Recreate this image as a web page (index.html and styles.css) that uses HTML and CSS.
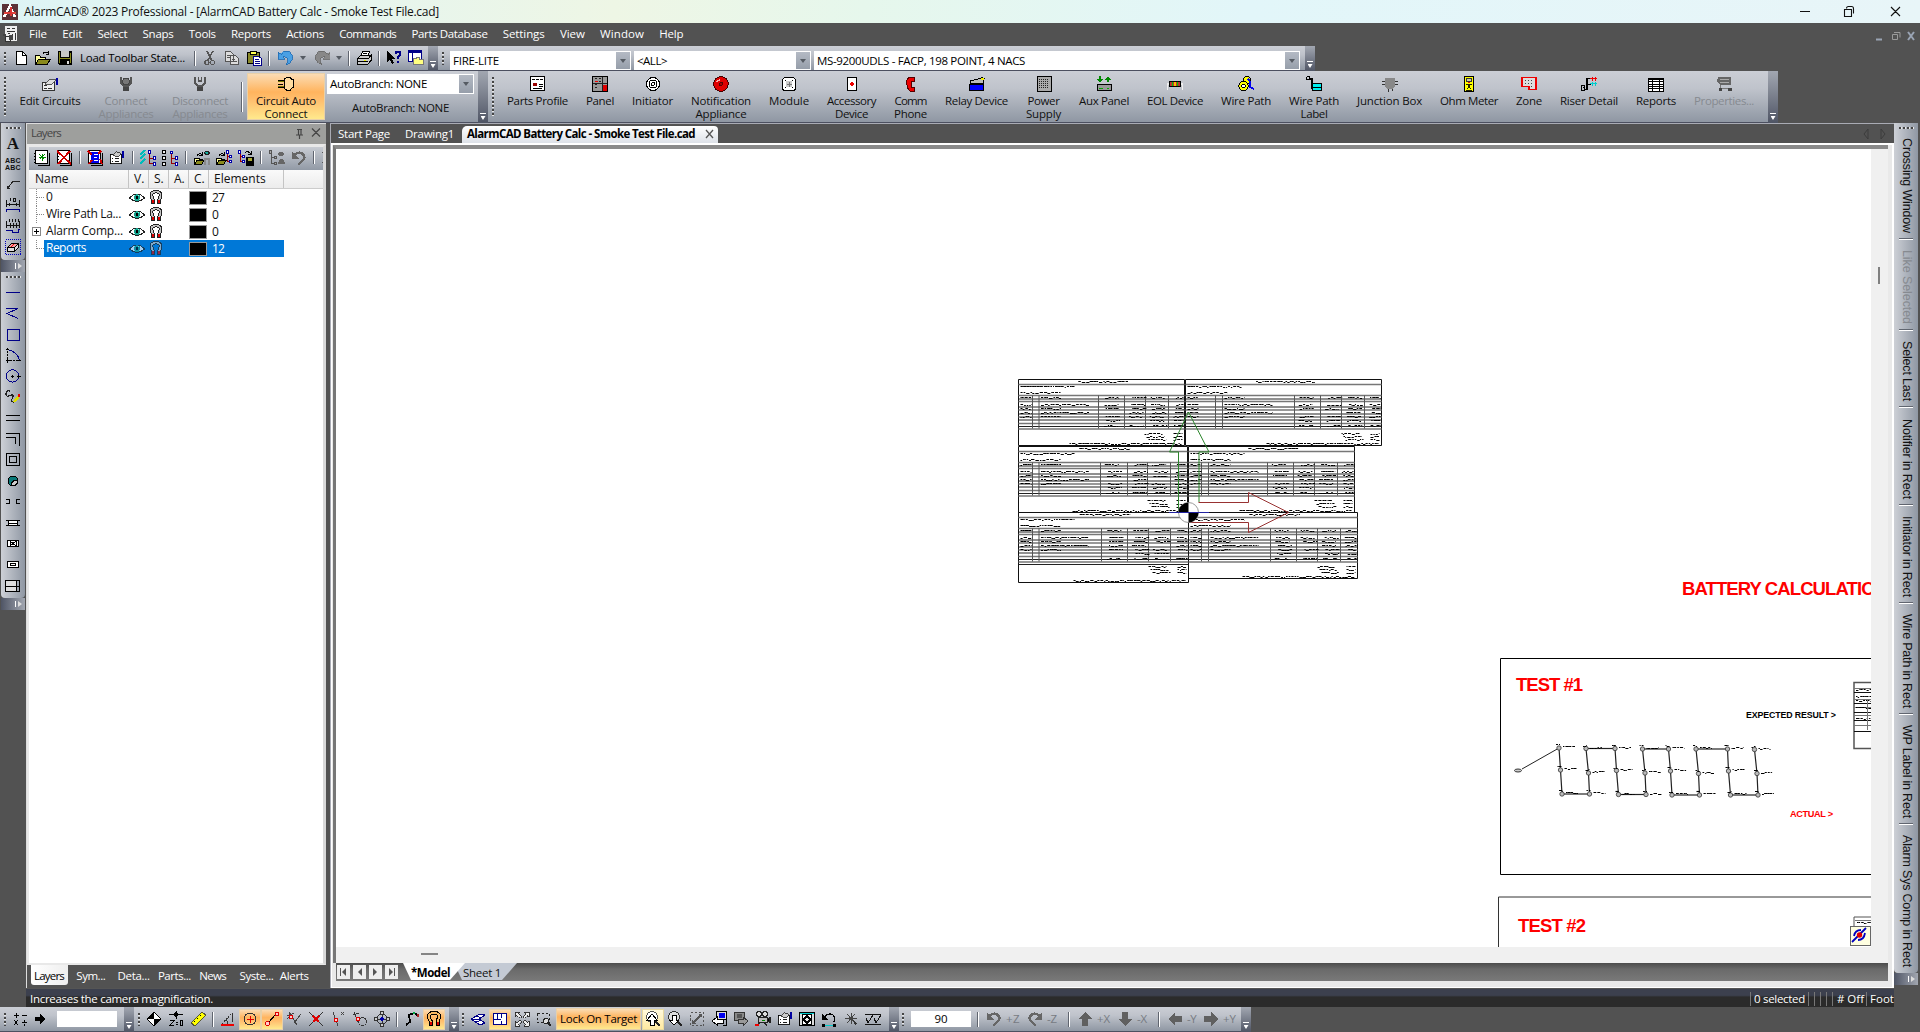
FILE: index.html
```html
<!DOCTYPE html>
<html lang="en">
<head>
<meta charset="utf-8">
<title>AlarmCAD® 2023 Professional</title>
<link rel="stylesheet" href="styles.css">
</head>
<body>
<svg class="defs" aria-hidden="true">
  <symbol id="app" viewBox="0 0 16 16"><rect width="16" height="16" rx="1" fill="#5b3238"/><path d="M2 13L8 2l5 11" stroke="#fff" stroke-width="2.4" fill="none"/><path d="M2 9h12" stroke="#e0403c" stroke-width="2.4"/><path d="M9 3v9" stroke="#d33" stroke-width="2"/></symbol>
  <symbol id="doc" viewBox="0 0 16 16"><path fill="#eee" d="M2 0h12v15H2z"/><path stroke="#333" fill="none" d="M2 10h5v5H2zM4 2h3M9 2h3M4 5h8M9 8v5M12 7v7M5 7h2"/><path d="M0 8h3v2H0zM6 9h4v5H6z" fill="#444"/></symbol>
  <symbol id="new" viewBox="0 0 16 16"><path d="M3.5 1.5h6l4 4v9h-10z" fill="#fff" stroke="#000"/><path d="M9.500 1.500v4h4" fill="none" stroke="#000"/></symbol>
  <symbol id="open" viewBox="0 0 16 16"><path d="M.5 14.500v-9h4l1 1.500h5v3" fill="#ffff9c" stroke="#000"/><path d="M.5 14.500l3-5h12l-3.500 5z" fill="#8a8a1c" stroke="#000"/><path d="M8 3.500q3-3 5.500 0M13.500 1v3h-3" fill="none" stroke="#000"/></symbol>
  <symbol id="save" viewBox="0 0 16 16"><path d="M1 1h14v14H2l-1-1z" fill="#000"/><path d="M4 1h8v6H4z" fill="#c8c8c8"/><path d="M2 2h1v11H2zM13 3h1v10h-1zM3 8h10v1H3z" fill="#8a8a1c"/><path d="M10 11h2v3h-2z" fill="#ddd"/></symbol>
  <symbol id="cut" viewBox="0 0 16 16"><path d="M5 1l4.500 9M11 1L6 10" stroke="#555" stroke-width="1.500"/><circle cx="5" cy="12.500" r="2" fill="none" stroke="#555" stroke-width="1.300"/><circle cx="10.500" cy="12.500" r="2" fill="none" stroke="#555" stroke-width="1.300"/></symbol>
  <symbol id="copy" viewBox="0 0 16 16"><path d="M1.500 1.500h5l3 3v7h-8zM6.500 5.500h5l3 3v6h-8z" fill="#ddd" stroke="#555"/><path d="M3 5.500h3M3 7.500h3M8 9.500h3M8 11.500h5" stroke="#555"/></symbol>
  <symbol id="paste" viewBox="0 0 16 16"><path d="M1.500 2.500h12v11h-12z" fill="#8a8a2a" stroke="#000"/><path d="M4.500 1h6v3h-6z" fill="#ffff50" stroke="#000"/><path d="M7.500 6.500h5l3 2v7h-8z" fill="#fff" stroke="#008"/><path d="M9 9.500h4M9 11.500h5M9 13.500h5" stroke="#008"/></symbol>
  <symbol id="undo" viewBox="0 0 16 16"><path d="M0 9V2l2.500 2Q7-1 12 2q4 4 2 8-2 4-6 5 3-4 1-7-2-2-4-1l2 2z" fill="#4aa0e4" stroke="#1c68b0" stroke-width=".8"/></symbol>
  <symbol id="redo" viewBox="0 0 16 16"><path d="M16 9V2l-2.500 2Q9-1 4 2q-4 4-2 8 2 4 6 5-3-4-1-7 2-2 4-1l-2 2z" fill="#888" stroke="#666" stroke-width=".8"/></symbol>
  <symbol id="print" viewBox="0 0 16 16"><path d="M5 5.500L6.500 1.500h7L12 5.500" fill="#fff" stroke="#000"/><path d="M1.500 8.500l3-3h10l-2 3zM1.500 8.500h11l2.500-3v5l-3 3.500h-10.500z" fill="#ccc" stroke="#000"/><path d="M7 3.500h4M2 11.500h10" stroke="#000"/><path d="M8 10h2" stroke="#ee0"/></symbol>
  <symbol id="help" viewBox="0 0 16 16"><path d="M1 1v11l3-2.500 2 4.500 2-1-2-4h4z" fill="#000"/><path d="M9.500 4q0-2.500 2.500-2.500T14.500 4q0 1.500-2.500 2.500v2.500M12 10.500v2" stroke="#008" stroke-width="2" fill="none"/></symbol>
  <symbol id="win" viewBox="0 0 16 16"><path d="M.5.5h13v11H.5z" fill="#fff" stroke="#008"/><path d="M0 0h14v3H0z" fill="#008"/><path d="M4 3v8" stroke="#008"/><path d="M5.500 14.500V8h3l1-1h2v2h4v5.500z" fill="#ffff80" stroke="#777"/></symbol>
  <symbol id="props" viewBox="0 0 18 16"><path d="M1.500 3.500h12v11h-12z" fill="#fff" stroke="#000"/><path d="M3 8.500h2M6.500 8.500h5M3 11.500h2M6.500 11.500h5" stroke="#000"/><path d="M4 5l4-4 6 2-4 4z" fill="#ccc" stroke="#333"/><path d="M14 0h3v8h-2z" fill="#0000a0"/></symbol>
  <symbol id="edit" viewBox="0 0 18 16"><path d="M1.500 6.500h12v8h-12z" fill="#eee" stroke="#333"/><path d="M3 9.500h3M3 12.500h3M7 12.500h4" stroke="#333"/><path d="M4 8l5-5 6 1-5 5z" fill="#ddd" stroke="#555"/><path d="M14.500 2h2.500v7h-2z" fill="#0000a0"/></symbol>
  <symbol id="con" viewBox="0 0 16 16"><path d="M3 1v6l3 3h4l3-3V1" fill="none" stroke="#555" stroke-width="2"/><circle cx="8" cy="5.500" r="3.300" fill="#777" stroke="#444"/><path d="M5 11h6v4H5z" fill="#444"/></symbol>
  <symbol id="dis" viewBox="0 0 16 16"><path d="M3 1v6l3 3h4l3-3V1M6.500 1v4h3V1" fill="none" stroke="#555" stroke-width="1.500"/><path d="M5 11h6v4H5z" fill="#444"/></symbol>
  <symbol id="plug" viewBox="0 0 16 16"><path d="M0 4h6v2H0zM0 10h6v2H0z" fill="#770"/><path d="M0 4.500h6M0 8h5M0 11.500h6" stroke="#000"/><path d="M6.500 2.500L9 1.500h3v13H9l-2.500-2z" fill="#ffdca0" stroke="#000"/><path d="M12 2.500l3 1v8l-3 2" fill="#ffdca0" stroke="#000"/></symbol>
  <symbol id="parts" viewBox="0 0 16 16"><path d="M.5.5h14v14H.5z" fill="#fff" stroke="#000"/><path d="M2 3.500h3M6 3.500h3M10 3.500h3M9 8.500h4M9 10.500h4M3 12.500h9" stroke="#000"/><circle cx="5" cy="8.500" r="2" fill="#900"/></symbol>
  <symbol id="panel" viewBox="0 0 16 16"><path d="M.5.5h15v15H.5z" fill="#999" stroke="#000"/><path d="M3 2.500h2M3 5.500h2M3 8.500h2M3 11.500h2M7 2.500h2M7 5.500h2M10.500 1v14M1 7.500h14" stroke="#222"/><path d="M11 9h4v6h-4z" fill="#d00"/><path d="M3 5h3v1H3z" fill="#e00"/></symbol>
  <symbol id="init" viewBox="0 0 16 16"><circle cx="8" cy="8" r="6.500" fill="#fff" stroke="#000"/><circle cx="8" cy="8" r="4" fill="none" stroke="#000"/><circle cx="8" cy="8" r="1.500" fill="none" stroke="#000"/></symbol>
  <symbol id="bell" viewBox="0 0 16 16"><circle cx="8" cy="8" r="7.300" fill="#e00000" stroke="#400"/><circle cx="8" cy="8" r="1.500" fill="#a00" stroke="#500"/><path d="M4 6q1-2 3-2" stroke="#faa" fill="none" stroke-width="1.500"/></symbol>
  <symbol id="mod" viewBox="0 0 16 16"><rect x="1.500" y="1.500" width="13" height="13" rx="3" fill="#fff" stroke="#000"/><circle cx="8" cy="8" r="3.500" fill="#ccc"/><path d="M8 5.500v5M5.500 8h5" stroke="#777"/><path d="M4 4h1v1H4zM11 4h1v1h-1zM11 11h1v1h-1zM4 11h1v1H4z"/></symbol>
  <symbol id="acc" viewBox="0 0 16 16"><path d="M3.500 1.500h9v13h-9z" fill="#fff" stroke="#000"/><path d="M8 6v4M6 8h4" stroke="#e00" stroke-width="1.300"/></symbol>
  <symbol id="phone" viewBox="0 0 16 16"><path d="M6 1h5v4H8.500q-1 3 0 6H11v4H7Q3 12 4 4z" fill="#e00" stroke="#500"/></symbol>
  <symbol id="relay" viewBox="0 0 16 16"><path d="M.5 8.500h14v6H.5z" fill="#00f" stroke="#000"/><path d="M1 7.500V5l10-2.500 2-1 2 1-1 5z" fill="#bbb" stroke="#000"/><path d="M12 2h3v2h-3z" fill="#ee0"/></symbol>
  <symbol id="power" viewBox="0 0 16 16"><path d="M1 .5h14v15H1z" fill="#aaa" stroke="#000"/><path d="M3 3.500h10M3 5.500h10M3 7.500h10M3 9.500h10M3 11.500h10" stroke="#222" stroke-dasharray="1 1"/></symbol>
  <symbol id="aux" viewBox="0 0 16 16"><path d="M1 8.500h14v6H1z" fill="#999" stroke="#000"/><path d="M3 12.500h4M11 12.500h2" stroke="#0a0"/><path d="M4 0v5M12 6V1" stroke="#080" stroke-width="2"/><path d="M1 3h6L4 6.500zM9 3.500h6L12 0z" fill="#080"/></symbol>
  <symbol id="eol" viewBox="0 0 16 16"><path d="M0 14V8h16v6" stroke="#eee" fill="none" stroke-width="1.500"/><rect x="2.500" y="5.500" width="11" height="5" rx="1" fill="#b33" stroke="#000"/><path d="M5.500 6v4M10.500 6v4" stroke="#0c0"/><path d="M8 6v4" stroke="#fb0" stroke-width="2"/></symbol>
  <symbol id="wire" viewBox="0 0 16 16"><circle cx="9" cy="4" r="3.500" fill="#ff0" stroke="#000"/><path d="M10 3q3 3 2 8l4 2" stroke="#00e" stroke-width="2" fill="none"/><circle cx="5.500" cy="10" r="4.700" fill="#ff0" stroke="#000"/><circle cx="5.500" cy="10" r="1.800" fill="#fff" stroke="#000"/></symbol>
  <symbol id="wlab" viewBox="0 0 16 16"><circle cx="2" cy="2" r="1.500" fill="none" stroke="#000"/><path d="M3 3h3v9h1" stroke="#000" fill="none" stroke-width="1.200"/><path d="M6.500 7.500h9v7h-9z" fill="#0ee" stroke="#000"/><path d="M7 11h8" stroke="#000"/></symbol>
  <symbol id="jbox" viewBox="0 0 16 16"><path d="M0 5.500h16M0 8.500h16M6.500 12v4M10 12v3" stroke="#333"/><path d="M3 2h10v9l-3 2H6l-3-2z" fill="#888"/></symbol>
  <symbol id="ohm" viewBox="0 0 16 16"><path d="M3.500.5h9v15h-9z" fill="#ff0" stroke="#000"/><path d="M5.500 2.500h5v3h-5z" fill="#cca" stroke="#333"/><path d="M6 13l4-5M10 13L6 8M5 8h6M5 14h6" stroke="#220"/><path d="M7 6h2v1H7z" fill="#e00"/></symbol>
  <symbol id="zone" viewBox="0 0 16 16"><path d="M1 1.500h14v12H8v-3H1z" fill="#ddd" stroke="#e00" stroke-width="1.300"/><path d="M4 4.500h9M4 7.500h9M10 10.500h3" stroke="#444" stroke-dasharray="1 2"/></symbol>
  <symbol id="riser" viewBox="0 0 16 16"><path d="M.5 9.500h3v5h-3zM3 13.500h3V2.500h4M3 12V11M7 8.500h3" fill="none" stroke="#000" stroke-width="1.300"/><path d="M9 2.500h7M11 .5v4M14 .5v4" stroke="#e00"/><path d="M9 7.500h7M11 5.500v4M14 5.500v4" stroke="#0cc"/></symbol>
  <symbol id="rep" viewBox="0 0 16 16"><path d="M.5 2h15v13H.5z" fill="#fff" stroke="#000"/><path d="M0 1.500h16v2H0z"/><path d="M1 5.500h14M1 8.500h14M1 10.500h14M1 12.500h14M4.500 3v12M11.500 3v12" stroke="#000"/></symbol>
  <symbol id="prp2" viewBox="0 0 16 16"><path d="M2 1h13v8H4L1 5z" fill="#666"/><path d="M4 3.500h9M4 6h9" stroke="#aaa"/><path d="M4 9v3h9" stroke="#777" fill="none"/><path d="M3 12h3v3H3zM12 12h4v3h-4z" fill="#444"/></symbol>
  <symbol id="eye" viewBox="0 0 16 12"><path d="M.5 6Q8-2 15.500 6 8 13 .5 6z" fill="#fff" stroke="#222"/><circle cx="8" cy="5.800" r="3.500" fill="#14a08c"/><circle cx="8" cy="5.800" r="1.500"/><path d="M5 3l1 1M11 8l-1-1M10 3l-1 1M5 8l1-1" stroke="#9fe"/></symbol>
  <symbol id="mag" viewBox="0 0 14 16"><path d="M3.500 15v-5Q.5 4 4 2.500 7 .5 10 2.500q3.500 1.500.500 7.500v5" fill="none" stroke="#222" stroke-width="4"/><path d="M3.500 14v-4Q.5 4 4 2.500 7 .5 10 2.500q3.500 1.500.5 7.500v4" fill="none" stroke="#c4c4c4" stroke-width="2"/><path d="M2.500 10.500h2v3.500h-2zM9.500 10.500h2v3.500h-2z" fill="#d00"/></symbol>
  <symbol id="ladd" viewBox="0 0 16 16"><path d="M1.500.5h12v13h-12z" fill="#fff" stroke="#000"/><path d="M15 3v12.500H4" stroke="#000" fill="none"/><path d="M0 3h2M0 6h2M0 9h2M0 12h2" stroke="#000"/><path d="M8 3.500v7M4.500 7h7M5.500 4.500l5 5M10.500 4.500l-5 5" stroke="#080"/></symbol>
  <symbol id="ldel" viewBox="0 0 16 16"><path d="M1.500.5h12v13h-12z" fill="#fff" stroke="#000"/><path d="M15 3v12.500H4M1 3h2M1 6h2M1 9h2" stroke="#000" fill="none"/><path d="M1 1l14 13M14 1L2 14" stroke="#c00" stroke-width="1.800"/></symbol>
  <symbol id="lsel" viewBox="0 0 16 16"><path d="M1.500.5h12v13h-12z" fill="#fff" stroke="#000"/><path d="M4 2h8v11H4z" fill="#00e"/><path d="M15 3v12.500H4" stroke="#000" fill="none"/><path d="M7 4.500h4M7 7.500h3M7 10.500h4" stroke="#fff"/><path d="M1 1l4 4M13 9l2 5M14 1l-3 3M2 14l3-4" stroke="#c00" stroke-width="1.800"/></symbol>
  <symbol id="tree1" viewBox="0 0 16 16"><path d="M5 0L0 5M5 4L0 9M5 9l-5 5" stroke="#0bb" stroke-width="2"/><path d="M9.500 3v10h3M9.500 8.500h3" stroke="#900" fill="none"/><path d="M8.500.5h2v3h-2zM13 6.500h2v3h-2zM13 12h2v3h-2z" fill="#fff" stroke="#00a"/></symbol>
  <symbol id="tree2" viewBox="0 0 16 16"><path d="M.5.5h3v3h-3zM.5 6.500h3v3h-3zM.5 12h3v3h-3z" fill="#eee" stroke="#000"/><path d="M9.500 3v10h3M9.500 8.500h3" stroke="#900" fill="none"/><path d="M8.500 1.500h2v2h-2zM13 6.500h2v3h-2zM13 12h2v3h-2z" fill="#fff" stroke="#00a"/></symbol>
  <symbol id="topen" viewBox="0 0 16 16"><path d="M.5 14.500V8h4l1 1h3v2" fill="#ffff9c" stroke="#000"/><path d="M.5 14.500l2.500-4h7l-2.500 4z" fill="#8a8a1c" stroke="#000"/><path d="M3 6q2-4 5-1M8 2v3H5" fill="none" stroke="#000"/><path d="M10 3q2.500-3 6 0-3 3-6 0z" fill="#1a9" stroke="#222"/><path d="M11 15V9h4v6" stroke="#888" fill="none" stroke-width="2"/></symbol>
  <symbol id="topen2" viewBox="0 0 16 16"><path d="M.5 14.500V8h4l1 1h3v2" fill="#ffff9c" stroke="#000"/><path d="M.5 14.500l2.500-4h7l-2.500 4z" fill="#8a8a1c" stroke="#000"/><path d="M3 6q2-4 5-1M8 2v3H5" fill="none" stroke="#000"/><path d="M11.500 2v9h3M11.500 6.500h3" stroke="#900" fill="none"/><path d="M10.500.5h2v3h-2zM13.500 5.500h2v2h-2zM13.500 10h2v2h-2z" fill="#fff" stroke="#00a"/></symbol>
  <symbol id="tsave" viewBox="0 0 16 16"><path d="M2 2v9h3M2 6.500h3" stroke="#900" fill="none"/><path d="M.5.5h2v3h-2zM4.500 5.500h2v2h-2zM4.500 10h2v2h-2z" fill="#fff" stroke="#00a"/><path d="M8 7h8v9H8z"/><path d="M10 8h4v3h-4z" fill="#aa3"/><path d="M7 3q3-3 6 1M13 1v3h-3" fill="none" stroke="#000"/></symbol>
  <symbol id="tgray" viewBox="0 0 16 16"><path d="M2 2v11h3M2 7.500h3" stroke="#555" fill="none"/><path d="M.5.500h2v3h-2zM5 6.500h2v2H5zM5 12h2v2H5z" fill="#aaa" stroke="#555"/><path d="M8 4q4-4 8 0-4 4-8 0zM9 14q0-4 3.500-5 3.500 1 3.500 5z" fill="#666"/></symbol>
  <symbol id="ugray" viewBox="0 0 16 16"><path d="M3 5q5-4 9-1 3 4-1 7l-4 4" stroke="#666" stroke-width="2.600" fill="none"/><path d="M1 1v8h7z" fill="#666"/></symbol>
  <symbol id="rgray" viewBox="0 0 16 16"><path d="M13 5Q8 1 4 4q-3 4 1 7l4 4" stroke="#666" stroke-width="2.600" fill="none"/><path d="M15 1v8H8z" fill="#666"/></symbol>
  <symbol id="gup" viewBox="0 0 16 16"><path d="M8 1l7 7h-4v7H5V8H1z" fill="#606060"/></symbol>
  <symbol id="gdn" viewBox="0 0 16 16"><path d="M8 15l7-7h-4V1H5v7H1z" fill="#606060"/></symbol>
  <symbol id="glf" viewBox="0 0 16 16"><path d="M1 8l7-7v4h7v6H8v4z" fill="#606060"/></symbol>
  <symbol id="grt" viewBox="0 0 16 16"><path d="M15 8L8 1v4H1v6h7v4z" fill="#606060"/></symbol>
  <symbol id="sun" viewBox="0 0 5 12"><path d="M5 2a4 4 0 0 0 0 7z" fill="#ffff60"/><path d="M0 0l2 2M0 11l2-2" stroke="#555"/></symbol>
  <symbol id="lead" viewBox="0 0 16 16"><path d="M2.500 12.500L7.500 6l1-1h6.500M2 9.500v3h3" fill="none" stroke="#222"/></symbol>
  <symbol id="dim" viewBox="0 0 16 16"><path d="M1.500 3v7M14.500 3v7M1 7.500h14M4.500 6v3M11.500 6v3M5.500 1v3M8 1h2v3H8z" stroke="#111" fill="none"/><path d="M1.500 15v-2.500h13V15" stroke="#008" fill="none"/></symbol>
  <symbol id="dim2" viewBox="0 0 16 16"><path d="M1.500 3v7M14.500 3v7M1 7.500h14M5.500 5v5M8.500 5v5M11.500 5v5M4 1v3M7 1v3M10 1v3M13 1v3" stroke="#111"/><path d="M1 12.500h6v2h6V11h2" stroke="#008" fill="none"/></symbol>
  <symbol id="erase" viewBox="0 0 16 16"><path d="M.5.500h15v15H.500z" fill="none" stroke="#00b" stroke-dasharray="1 1"/><path d="M2.500 8.500l4-4h7l-4 4z" fill="#f4a0a0" stroke="#000"/><path d="M2.500 8.500h7v4h-7zM9.500 8.500l4-4v4l-4 4z" fill="#ddd" stroke="#000"/><path d="M6 7.500l3-2" stroke="#e00"/></symbol>
  <symbol id="line" viewBox="0 0 16 16"><path d="M1 8.500h14" stroke="#008"/></symbol>
  <symbol id="pline" viewBox="0 0 16 16"><path d="M1 3.500h12L2 8.500l11 5" stroke="#008" fill="none"/></symbol>
  <symbol id="rect" viewBox="0 0 16 16"><path d="M2.500 3h12v11h-12z" stroke="#008" fill="none"/></symbol>
  <symbol id="arc" viewBox="0 0 16 16"><path d="M2.500 2.500q10 2 12 11" stroke="#008" fill="none"/><path d="M2.500 1v12.500H15" stroke="#000" fill="none" stroke-dasharray="1.500 1.500"/><path d="M1 13.500h4M2.500 12v4M12 13.500h4M1 2.500h3" stroke="#000"/></symbol>
  <symbol id="circ" viewBox="0 0 16 16"><circle cx="7.500" cy="8" r="6.200" stroke="#008" fill="none"/><path d="M6 8.500h3M7.500 7v3M12 8.500h4M13.500 7v3" stroke="#000"/></symbol>
  <symbol id="free" viewBox="0 0 16 16"><path d="M5 2Q1 1 1 5t5 1q4-1 1 4-2 3 2 3" fill="none" stroke="#222" stroke-width="1.300"/><path d="M9 13l5-6" stroke="#dd0" stroke-width="2.500"/><path d="M13 7l2-1" stroke="#e00" stroke-width="2.500"/></symbol>
  <symbol id="dline" viewBox="0 0 16 16"><path d="M1 5.500h14M1 10.500h14" stroke="#000"/></symbol>
  <symbol id="dcorn" viewBox="0 0 16 16"><path d="M1 2.500h13.500V15M1 6.500h9.500V13" stroke="#000" fill="none"/></symbol>
  <symbol id="drect" viewBox="0 0 16 16"><path d="M1.500 1.500h13v12h-13zM4.500 4.500h7v6h-7z" stroke="#000" fill="none"/></symbol>
  <symbol id="ball" viewBox="0 0 16 16"><circle cx="8" cy="8" r="5" fill="#0a7878" stroke="#000"/><path d="M7 13q-2-6 6-6-1 6-6 6z" fill="#ccc" stroke="#000"/></symbol>
  <symbol id="gap" viewBox="0 0 16 16"><path d="M1 5.500h3.500v4H1M15 5.500h-3.500v4H15" stroke="#000" fill="none"/></symbol>
  <symbol id="wall" viewBox="0 0 16 16"><path d="M1 5.500h14M1 10.500h14" stroke="#000"/><path d="M3.500 5.500h9v5h-9z" fill="#fff" stroke="#000"/><path d="M3 8h10" stroke="#000"/></symbol>
  <symbol id="wallx" viewBox="0 0 16 16"><path d="M2.500 4.500h11v6h-11z" fill="#fff" stroke="#000"/><path d="M5 5l6 5M11 5l-6 5M5 5v5M11 5v5" stroke="#000"/></symbol>
  <symbol id="wallr" viewBox="0 0 16 16"><path d="M2.500 4.500h11v6h-11z" fill="#fff" stroke="#000"/><path d="M5.500 6.500h5v2h-5z" fill="none" stroke="#000"/></symbol>
  <symbol id="grid" viewBox="0 0 16 16"><path d="M1 3h10v5H1zM1 9h10v4H1z" fill="#ddd"/><path d="M.5 2.500H15M.5 2v12M.5 13.500H15M0 8.500h15M11.500 2v12M14.500 2v12" stroke="#000"/></symbol>
  <symbol id="calc" viewBox="0 0 16 16"><path d="M2 4.500h5M4.500 2v5M10 4.500h5M2 9l4 5M6 9l-4 5M10 11.500h5M12.500 9v1.500M12.500 13v1.500" stroke="#000"/></symbol>
  <symbol id="arr" viewBox="0 0 16 16"><path d="M3 6h5V3l6 5-6 5v-3H3z"/></symbol>
  <symbol id="diam" viewBox="0 0 16 16"><path d="M8 1l7 7-7 7-7-7z" fill="#fff" stroke="#000"/><path d="M8 1v7H1zM8 15V8h7z"/></symbol>
  <symbol id="zz" viewBox="0 0 16 16"><path d="M8 0l3 3.500-3 3.500-3-3.500z"/><path d="M1 3.500h14M8.500 0v8M2 9.500h4L2 14.500h4M8 11.500h2M8 13.500h2M12 9.500h2v5h-2z" stroke="#000" fill="none"/></symbol>
  <symbol id="ruler" viewBox="0 0 16 16"><path d="M1 12L12 1l4 3L5 15z" fill="#ff0" stroke="#553"/><path d="M4 10l1 1M7 7l1 1M10 4l1 1" stroke="#000"/></symbol>
  <symbol id="angle" viewBox="0 0 16 16"><path d="M2 13L12 2" stroke="#333" stroke-dasharray="2 1"/><path d="M12.500 2v9M6 9q2 1 1 4" stroke="#333" fill="none"/><path d="M1 13.500h13" stroke="#e00" stroke-width="2"/></symbol>
  <symbol id="cen" viewBox="0 0 16 16"><circle cx="8" cy="8" r="6" stroke="#333" fill="none"/><path d="M8.500 5v7M5 8.500h7" stroke="#d00"/></symbol>
  <symbol id="endp" viewBox="0 0 16 16"><path d="M4 12l8-9" stroke="#000"/><circle cx="3.500" cy="12.500" r="2" fill="#fcc" stroke="#d00"/><circle cx="13" cy="3" r="2" fill="#fcc" stroke="#d00"/></symbol>
  <symbol id="perp" viewBox="0 0 16 16"><path d="M3 1l8 13M1 5l7-3M8 12l7-9M1 8l5-4" stroke="#444"/><circle cx="5" cy="6" r="1.700" fill="#fcc" stroke="#d00"/></symbol>
  <symbol id="cross" viewBox="0 0 16 16"><path d="M1 1l14 14M15 1L1 15" stroke="#333"/><path d="M5 5l6 6M11 5l-6 6" stroke="#d00" stroke-width="1.600"/></symbol>
  <symbol id="near" viewBox="0 0 16 16"><path d="M3 1l5 14M11 1l3 3M14 1l-3 3" stroke="#444"/><circle cx="6" cy="9" r="2" fill="#fcc" stroke="#d00"/></symbol>
  <symbol id="tang" viewBox="0 0 16 16"><path d="M2 1l4 10M1 4l6-2" stroke="#333"/><circle cx="10.500" cy="10.500" r="4" fill="none" stroke="#333"/><circle cx="6" cy="8" r="1.700" fill="#fcc" stroke="#d00"/></symbol>
  <symbol id="quad" viewBox="0 0 16 16"><circle cx="8" cy="8" r="5" fill="none" stroke="#333"/><path d="M8 1v14M1 8h14" stroke="#333"/><path d="M8 6v4M6 8h4" stroke="#00a" stroke-width="2"/><path d="M6.500.5h3v3h-3zM6.500 12.500h3v3h-3zM.5 6.500h3v3h-3zM12.500 6.500h3v3h-3z" fill="#ccc" stroke="#333"/></symbol>
  <symbol id="path" viewBox="0 0 16 16"><path d="M2 14l4-3-1-7 5-2 5 3" fill="none" stroke="#000" stroke-width="1.800"/><path d="M9 1h2v2H9z" fill="#0a4"/><path d="M13 3h2v3h-2z" fill="#a22"/></symbol>
  <symbol id="snap" viewBox="0 0 16 16"><path d="M4.500 15v-5Q1 4 5 2.500 8 .5 11 2.500q4 1.500.5 7.500v5" fill="none" stroke="#000" stroke-width="4"/><path d="M4.500 14v-4Q1 4 5 2.500 8 .5 11 2.500q4 1.500.5 7.500v4" fill="none" stroke="#f8b860" stroke-width="2"/><path d="M3.500 11h2v3h-2zM10.500 11h2v3h-2z" fill="#d00"/></symbol>
  <symbol id="view" viewBox="0 0 16 16"><path d="M1 8l9-5 5 1-6 4 6 4-5 2z" fill="#fff" stroke="#008"/><path d="M1 8h8M6 5l6 2M6 11l6-2" stroke="#008"/></symbol>
  <symbol id="plan" viewBox="0 0 16 16"><path d="M1.500 2.500h13v11h-13z" fill="#fff" stroke="#008"/><path d="M5.500 3v5M9.500 3v4M9.500 10v3M2 8.500h7" stroke="#008"/></symbol>
  <symbol id="fit" viewBox="0 0 16 16"><path d="M1 1h5L4.500 3 7 5.500 5.500 7 3 4.500 1 6zM15 1h-5l1.500 2L9 5.500 10.500 7 13 4.500 15 6zM1 15h5l-1.500-2L7 10.500 5.500 9 3 11.500 1 10zM15 15h-5l1.500-2L9 10.500 10.500 9l2.500 2.500 2-1.500z" fill="#eee" stroke="#222" stroke-width=".9"/></symbol>
  <symbol id="zwin" viewBox="0 0 16 16"><path d="M1.500 2.500h12v9h-12z" fill="none" stroke="#222" stroke-dasharray="2 2"/><circle cx="10" cy="10" r="2.500" fill="#ddd" stroke="#222"/><path d="M12 12l3 3" stroke="#222" stroke-width="1.500"/></symbol>
  <symbol id="zin" viewBox="0 0 16 16"><circle cx="7" cy="6" r="5.500" fill="#fff" stroke="#555"/><path d="M10 10l5 5" stroke="#222" stroke-width="2.500"/><path d="M7 3l5 6H9v5H5V9H2z" fill="#fff" stroke="#000"/></symbol>
  <symbol id="zout" viewBox="0 0 16 16"><circle cx="7" cy="6" r="5.500" fill="#ddd" stroke="#333"/><path d="M10 10l5 5" stroke="#222" stroke-width="2.500"/><path d="M7 14L2 9h3V4h4v5h3z" fill="#fff" stroke="#000"/></symbol>
  <symbol id="pan" viewBox="0 0 16 16"><path d="M1.500 1.500h13v13h-13z" fill="none" stroke="#555" stroke-dasharray="2 2"/><path d="M4 12l8-8" stroke="#555" stroke-width="2"/><path d="M3 9v4h4zM13 7V3H9z" fill="#555"/></symbol>
  <symbol id="vprev" viewBox="0 0 16 16"><path d="M5.500.5h10v8h-10z" fill="#ddd" stroke="#000"/><path d="M8 2h6v5H8z" fill="#00e"/><path d="M1 10l5-4v2h6v4H6v2z" fill="#fff" stroke="#000"/><path d="M12 14.500h3V9" stroke="#000" fill="none"/></symbol>
  <symbol id="vnext" viewBox="0 0 16 16"><path d="M1.500 1h10v8h-10z" fill="#888" stroke="#333"/><path d="M4 3h5v4H4z" fill="#555"/><path d="M15 10l-5-4v2H5v4h5v3z" fill="#999" stroke="#333"/></symbol>
  <symbol id="cam" viewBox="0 0 16 16"><circle cx="4" cy="3" r="2.400" fill="#ddd" stroke="#222"/><circle cx="10" cy="3" r="2.400" fill="#ddd" stroke="#222"/><path d="M3 6h9v5H3z" fill="#bbb" stroke="#222"/><path d="M12 8l3-1v4l-3-1M6 11l-4 3M9 11l3 4" stroke="#222" stroke-width="1.300"/><path d="M0 13h4v2H0z" fill="#e00"/><path d="M7 9h3" stroke="#080"/></symbol>
  <symbol id="vbox" viewBox="0 0 16 16"><path d="M.5 1.500h15v13H.5z" fill="#ddd" stroke="#000"/><path d="M1 2.500h14" stroke="#0cc"/><path d="M3.500 3.500h9v10h-9z" fill="#fff" stroke="#000"/><path d="M8 5l3.500 3.500L8 12 4.500 8.500z" fill="#eee" stroke="#000" stroke-width="1.500"/></symbol>
  <symbol id="rot" viewBox="0 0 16 16"><path d="M3 7q4-6 9-3 3 3 1 7" stroke="#000" fill="none" stroke-width="1.300"/><path d="M1 3v6h6z"/><path d="M2 14.500h12" stroke="#0cc"/><path d="M1 13h3v3H1zM12 13h3v3h-3z"/></symbol>
  <symbol id="spark" viewBox="0 0 16 16"><path d="M8.500 2v11M2 7.500h12M4 3l8 9M12 3l-8 9" stroke="#444"/><path d="M10 9l4 4-2 1z" fill="#333"/></symbol>
  <symbol id="chk" viewBox="0 0 16 16"><path d="M0 3.500h16M0 13.500h16M1 7l2 5 5-8M9 7l2 5 5-8" stroke="#111" fill="none"/></symbol>
</svg>

<header class="title">
  <svg class="i"><use href="#app"/></svg><span class="fs13" data-w="415">AlarmCAD® 2023 Professional - [AlarmCAD Battery Calc - Smoke Test File.cad]</span>
  <svg class="winctl" viewBox="0 0 110 20"><path d="M5 10.500h10M51.500 7.500q0-2 2-2h3q2 0 2 2v5M49.500 8.500h7v7h-7zM96 6l9 9M105 6l-9 9" stroke="#111" fill="none" stroke-width="1.100"/></svg>
</header>
<nav class="menu">
  <svg class="i"><use href="#doc"/></svg>
  <span data-w="18">File</span><span data-w="20">Edit</span><span data-w="30">Select</span><span data-w="31">Snaps</span><span data-w="27">Tools</span><span data-w="40">Reports</span><span data-w="38">Actions</span><span data-w="57">Commands</span><span data-w="76">Parts Database</span><span data-w="42">Settings</span><span data-w="25">View</span><span data-w="44">Window</span><span data-w="24">Help</span>
  <svg class="mdictl" viewBox="0 0 40 14"><path d="M0 10.500h6" stroke="#9aa4b4" stroke-width="2"/><path d="M16.500 5.500h5v5h-5zM18 3.500h6v5" stroke="#9a9a9a" fill="none"/><path d="M32 3l6 8M38 3l-6 8" stroke="#9aa4b4" stroke-width="2"/></svg>
</nav>

<div class="row1">
  <div class="bar std">
    <i class="grip"></i><b class="c"><svg class="i"><use href="#new"/></svg></b><b class="c"><svg class="i"><use href="#open"/></svg></b><b class="c"><svg class="i"><use href="#save"/></svg></b>
    <span class="loadtxt" data-w="105">Load Toolbar State...</span><i class="sep"></i>
    <b class="c"><svg class="i"><use href="#cut"/></svg></b><b class="c"><svg class="i"><use href="#copy"/></svg></b><b class="c"><svg class="i"><use href="#paste"/></svg></b><i class="sep"></i>
    <b class="c m2"><svg class="i"><use href="#undo"/></svg></b><i class="dd"></i><b class="c m2"><svg class="i"><use href="#redo"/></svg></b><i class="dd"></i><i class="sep"></i>
    <b class="c"><svg class="i"><use href="#print"/></svg></b><i class="sep"></i><b class="c"><svg class="i"><use href="#help"/></svg></b><b class="c"><svg class="i"><use href="#win"/></svg></b><i class="of"></i>
  </div>
  <div class="bar mfr">
    <i class="grip"></i>
    <div class="combo k1"><span data-w="46">FIRE-LITE</span><i class="dd"></i></div>
    <div class="combo k2"><span data-w="30">&lt;ALL&gt;</span><i class="dd"></i></div>
    <div class="combo k3"><span data-w="208">MS-9200UDLS - FACP, 198 POINT, 4 NACS</span><i class="dd"></i></div><i class="of"></i>
  </div>
</div>

<div class="row2">
  <div class="bar circuits">
    <i class="grip"></i>
    <div class="big e1"><svg class="i w18"><use href="#edit"/></svg><span data-w="61">Edit Circuits</span></div>
    <div class="big e2 off"><svg class="i"><use href="#con"/></svg><span data-w="43">Connect</span><span data-w="55">Appliances</span></div>
    <div class="big e3 off"><svg class="i"><use href="#dis"/></svg><span data-w="56">Disconnect</span><span data-w="55">Appliances</span></div>
    <i class="sep tall"></i>
    <div class="big e4 on"><svg class="i"><use href="#plug"/></svg><span data-w="60">Circuit Auto</span><span data-w="43">Connect</span></div>
    <div class="branch"><div class="combo"><span data-w="97">AutoBranch: NONE</span><i class="dd"></i></div><span class="btxt" data-w="97">AutoBranch: NONE</span></div><i class="of"></i>
  </div>
  <div class="bar devices">
    <i class="grip"></i>
    <div class="list">
    <div class="big"><svg class="i"><use href="#parts"/></svg><span data-w="61">Parts Profile</span></div>
    <div class="big"><svg class="i"><use href="#panel"/></svg><span data-w="28">Panel</span></div>
    <div class="big"><svg class="i"><use href="#init"/></svg><span data-w="41">Initiator</span></div>
    <div class="big"><svg class="i"><use href="#bell"/></svg><span data-w="60">Notification</span><span data-w="51">Appliance</span></div>
    <div class="big"><svg class="i"><use href="#mod"/></svg><span data-w="40">Module</span></div>
    <div class="big"><svg class="i"><use href="#acc"/></svg><span data-w="49">Accessory</span><span data-w="33">Device</span></div>
    <div class="big"><svg class="i"><use href="#phone"/></svg><span data-w="32">Comm</span><span data-w="33">Phone</span></div>
    <div class="big"><svg class="i"><use href="#relay"/></svg><span data-w="63">Relay Device</span></div>
    <div class="big"><svg class="i"><use href="#power"/></svg><span data-w="32">Power</span><span data-w="35">Supply</span></div>
    <div class="big"><svg class="i"><use href="#aux"/></svg><span data-w="50">Aux Panel</span></div>
    <div class="big"><svg class="i"><use href="#eol"/></svg><span data-w="56">EOL Device</span></div>
    <div class="big"><svg class="i"><use href="#wire"/></svg><span data-w="50">Wire Path</span></div>
    <div class="big"><svg class="i"><use href="#wlab"/></svg><span data-w="50">Wire Path</span><span data-w="27">Label</span></div>
    <div class="big"><svg class="i"><use href="#jbox"/></svg><span data-w="65">Junction Box</span></div>
    <div class="big"><svg class="i"><use href="#ohm"/></svg><span data-w="58">Ohm Meter</span></div>
    <div class="big"><svg class="i"><use href="#zone"/></svg><span data-w="26">Zone</span></div>
    <div class="big"><svg class="i"><use href="#riser"/></svg><span data-w="58">Riser Detail</span></div>
    <div class="big"><svg class="i"><use href="#rep"/></svg><span data-w="40">Reports</span></div>
    <div class="big off"><svg class="i"><use href="#prp2"/></svg><span data-w="60">Properties...</span></div>
    </div><i class="of"></i>
  </div>
</div>

<main class="main">
  <aside class="left">
    <div class="vbar v1"><i class="vgrip"></i><b class="letterA">A</b><b class="abc">ABC<br>ABC</b><svg class="i"><use href="#lead"/></svg><svg class="i"><use href="#dim"/></svg><svg class="i"><use href="#dim2"/></svg><svg class="i"><use href="#erase"/></svg></div><i class="vof"></i>
    <div class="vbar v2"><i class="vgrip"></i><svg class="i"><use href="#line"/></svg><svg class="i"><use href="#pline"/></svg><svg class="i"><use href="#rect"/></svg><svg class="i"><use href="#arc"/></svg><svg class="i"><use href="#circ"/></svg><svg class="i"><use href="#free"/></svg><svg class="i"><use href="#dline"/></svg><svg class="i"><use href="#dcorn"/></svg><svg class="i"><use href="#drect"/></svg><svg class="i"><use href="#ball"/></svg><svg class="i"><use href="#gap"/></svg><svg class="i"><use href="#wall"/></svg><svg class="i"><use href="#wallx"/></svg><svg class="i"><use href="#wallr"/></svg><svg class="i"><use href="#grid"/></svg></div><i class="vof"></i>
  </aside>
  <div class="center">
    <div class="work">
      <section class="panel">
        <div class="phead"><span data-w="30">Layers</span><svg viewBox="0 0 26 12"><path d="M2 2.500h5M3.500 2v6M6 2v6M1 8h7M4.500 8v4M17 1.500l8 8M25 1.500l-8 8" stroke="#444" fill="none" stroke-width="1.200"/></svg></div>
        <div class="pbody">
          <div class="ptools"><svg class="i"><use href="#ladd"/></svg><svg class="i"><use href="#ldel"/></svg><i class="sep"></i><svg class="i"><use href="#lsel"/></svg><svg class="i"><use href="#props"/></svg><i class="sep"></i><svg class="i"><use href="#tree1"/></svg><svg class="i"><use href="#tree2"/></svg><i class="sep"></i><svg class="i"><use href="#topen"/></svg><svg class="i"><use href="#topen2"/></svg><svg class="i"><use href="#tsave"/></svg><i class="sep"></i><svg class="i"><use href="#tgray"/></svg><svg class="i"><use href="#ugray"/></svg><i class="sep"></i><svg class="sun"><use href="#sun"/></svg></div>
          <div class="cols"><span>Name</span><span>V.</span><span>S.</span><span>A.</span><span>C.</span><span>Elements</span></div>
          <div class="r"><i class="t"></i><span class="n"><em data-w="6">0</em></span><svg class="eye"><use href="#eye"/></svg><svg class="mag"><use href="#mag"/></svg><i class="sw"></i><em class="q" data-w="12">27</em></div>
          <div class="r"><i class="t"></i><span class="n"><em data-w="75">Wire Path La...</em></span><svg class="eye"><use href="#eye"/></svg><svg class="mag"><use href="#mag"/></svg><i class="sw"></i><em class="q" data-w="6">0</em></div>
          <div class="r"><i class="t plus"></i><span class="n"><em data-w="77">Alarm Comp...</em></span><svg class="eye"><use href="#eye"/></svg><svg class="mag"><use href="#mag"/></svg><i class="sw"></i><em class="q" data-w="6">0</em></div>
          <div class="r sel"><i class="t last"></i><span class="n"><em data-w="40">Reports</em></span><svg class="eye"><use href="#eye"/></svg><svg class="mag"><use href="#mag"/></svg><i class="sw"></i><em class="q" data-w="12">12</em></div>
        </div>
        <div class="ptabs"><span class="act"><em data-w="30">Layers</em></span><span><em data-w="29">Sym...</em></span><span><em data-w="32">Deta...</em></span><span><em data-w="33">Parts...</em></span><span><em data-w="27">News</em></span><span><em data-w="34">Syste...</em></span><span><em data-w="29">Alerts</em></span></div>
      </section>
      <section class="docs">
        <div class="dtabs"><span class="p1" data-w="52">Start Page</span><span class="p2" data-w="49">Drawing1</span><div class="act"><span data-w="228">AlarmCAD Battery Calc - Smoke Test File.cad</span><svg viewBox="0 0 10 10"><path d="M1 1l7 8M8 1L1 9" stroke="#555" stroke-width="1.300"/></svg></div><svg class="tnav" viewBox="0 0 24 12"><path d="M5 1v10L1 6zM18 1v10l4-5z" fill="none" stroke="#3c3c3c"/></svg></div>
        <div class="frame">
          <div class="view">
            <svg id="canvas" viewBox="336 149 1535 798"></svg>
            <div class="vs"><i></i></div><div class="hs"><i></i></div>
          </div>
          <div class="sheets"><svg class="nav" viewBox="0 0 62 14"><path d="M0 0h13v14H0zM16 0h13v14H16zM32 0h13v14H32zM48 0h13v14H48z" fill="#eee"/><path d="M3.500 3v8M57.500 3v8" stroke="#555"/><path d="M9 3v8L5 7zM25 3v8l-4-4zM36 3v8l4-4zM52 3v8l4-4z" fill="#555"/></svg><span class="s1"><em data-w="39">*Model</em></span><span class="s2"><em data-w="38">Sheet 1</em></span></div>
        </div>
      </section>
    </div>
    <div class="status"><span class="msg" data-w="183">Increases the camera magnification.</span><span class="f0"><em data-w="51">0 selected</em></span><i></i><i></i><i></i><i></i><span class="f1"><em data-w="27">#&nbsp;Off</em></span><span class="f2"><em data-w="24">Foot</em></span></div>
  </div>
  <aside class="right">
    <div class="rbar"><i class="vgrip"></i>
      <span data-h="95">Crossing Window</span><i class="hsep"></i><span class="off" data-h="74">Like Selected</span><i class="hsep"></i><span data-h="60">Select Last</span><i class="hsep"></i><span data-h="80">Notifier in Rect</span><i class="hsep"></i><span data-h="81">Initiator in Rect</span><i class="hsep"></i><span data-h="94">Wire Path in Rect</span><i class="hsep"></i><span data-h="93">WP Label in Rect</span><i class="hsep"></i><span data-h="132">Alarm Sys Comp in Rect</span>
    </div><i class="vof"></i>
  </aside>
</main>

<footer class="foot">
  <div class="bar f1b"><i class="grip"></i><b class="c"><svg class="i"><use href="#calc"/></svg></b><b class="c"><svg class="i"><use href="#arr"/></svg></b><div class="inp"></div><i class="of"></i></div>
  <div class="bar f2b"><i class="grip"></i><b class="c"><svg class="i"><use href="#diam"/></svg></b><b class="c"><svg class="i"><use href="#zz"/></svg></b><b class="c"><svg class="i"><use href="#ruler"/></svg></b><i class="sep"></i><b class="c"><svg class="i"><use href="#angle"/></svg></b><b class="c on"><svg class="i"><use href="#cen"/></svg></b><b class="c on"><svg class="i"><use href="#endp"/></svg></b><b class="c"><svg class="i"><use href="#perp"/></svg></b><b class="c"><svg class="i"><use href="#cross"/></svg></b><b class="c"><svg class="i"><use href="#near"/></svg></b><b class="c"><svg class="i"><use href="#tang"/></svg></b><b class="c"><svg class="i"><use href="#quad"/></svg></b><i class="sep"></i><b class="c"><svg class="i"><use href="#path"/></svg></b><b class="c on"><svg class="i"><use href="#snap"/></svg></b><i class="of"></i></div>
  <div class="bar f3b"><i class="grip"></i><b class="c"><svg class="i"><use href="#view"/></svg></b><b class="c on"><svg class="i"><use href="#plan"/></svg></b><b class="c"><svg class="i"><use href="#fit"/></svg></b><b class="c"><svg class="i"><use href="#zwin"/></svg></b><div class="lock on"><span data-w="77">Lock On Target</span></div><b class="c hot"><svg class="i"><use href="#zin"/></svg></b><b class="c"><svg class="i"><use href="#zout"/></svg></b><b class="c"><svg class="i"><use href="#pan"/></svg></b><b class="c"><svg class="i"><use href="#vprev"/></svg></b><b class="c"><svg class="i"><use href="#vnext"/></svg></b><b class="c"><svg class="i"><use href="#cam"/></svg></b><b class="c"><svg class="i"><use href="#props"/></svg></b><b class="c"><svg class="i"><use href="#vbox"/></svg></b><b class="c"><svg class="i"><use href="#rot"/></svg></b><b class="c"><svg class="i"><use href="#spark"/></svg></b><b class="c"><svg class="i"><use href="#chk"/></svg></b><i class="of"></i></div>
  <div class="bar f4b"><i class="grip"></i><div class="inp"><span data-w="13">90</span></div><i class="sep"></i><div class="ax"><svg class="i"><use href="#ugray"/></svg><span data-w="14">+Z</span></div><div class="ax"><svg class="i"><use href="#rgray"/></svg><span data-w="10">-Z</span></div><i class="sep"></i><div class="ax"><svg class="i"><use href="#gup"/></svg><span data-w="13">+X</span></div><div class="ax"><svg class="i"><use href="#gdn"/></svg><span data-w="10">-X</span></div><i class="sep"></i><div class="ax"><svg class="i"><use href="#glf"/></svg><span data-w="9">-Y</span></div><div class="ax"><svg class="i"><use href="#grt"/></svg><span data-w="13">+Y</span></div><i class="of"></i></div>
</footer>
<script src="drawing.js"></script>
</body>
</html>
```
FILE: styles.css
```css
* { box-sizing: border-box; }
body { margin: 0; width: 1920px; height: 1032px; overflow: hidden; display: flex; flex-direction: column; background: #525252; font: 11.5px/14px "Open Sans", "Noto Sans", sans-serif; color: #111; }
em, i { font-style: normal; display: block; }
b { font-weight: 400; }
span, em { white-space: nowrap; }
.defs { display: none; }
.i { width: 16px; height: 16px; display: block; flex: none; overflow: visible; shape-rendering: crispEdges; }
.w18 { width: 18px; }
[data-w] { display: block; flex: none; }

.title { height: 23px; display: flex; align-items: center; padding-left: 2px; gap: 6px; background: linear-gradient(90deg, #def4f5, #e4f5f0 15%, #eef6e5 32%, #e6f7ec 45%, #e2f6f9 65%, #e8f5f8); }
.fs13 { font-size: 12px; }
.winctl { width: 110px; height: 20px; margin-left: auto; margin-right: 15px; margin-bottom: 2px; }
.menu { height: 23px; display: flex; align-items: center; padding-left: 3px; padding-bottom: 1px; color: #fff; }
.menu span { margin-right: 15.2px; }
.menu .i { margin-right: 10px; }
.mdictl { width: 40px; height: 14px; margin-left: auto; margin-right: 4px; margin-top: 3px; }

.row1, .row2, .foot { display: flex; flex: none; }
.row1 { height: 25px; }
.row2 { height: 52px; }
.foot { height: 25px; }
.bar { display: flex; align-items: center; background: linear-gradient(#cbced5, #bfc3cb 35%, #8f97a3); border-bottom: 1px solid #4c5060; border-radius: 0 4px 3px 0; }
.grip { width: 2px; height: 13px; margin: 0 4px; flex: none; background: repeating-linear-gradient(#444 0 2px, #e8e8e8 2px 3px, transparent 3px 4px); }
.c { width: 22px; height: 22px; flex: none; display: flex; align-items: center; justify-content: center; }
.sep { width: 8px; height: 15px; flex: none; background: linear-gradient(90deg, transparent 3px, #60656f 3px 4px, #fff 4px 5px, transparent 5px); }
.dd { width: 12px; height: 16px; flex: none; display: flex; align-items: center; justify-content: center; }
.dd::after { content: ""; border: 3px solid transparent; border-top: 4px solid #555b63; border-bottom: 0; }
.of { width: 10px; align-self: stretch; flex: none; margin-left: auto; margin-bottom: -1px; background: linear-gradient(#a2a7b1, #4f5565); display: flex; flex-direction: column; align-items: center; justify-content: flex-end; gap: 2px; padding-bottom: 3px; }
.of::before { content: ""; width: 6px; height: 1px; background: #fff; }
.of::after { content: ""; width: 5px; height: 4px; background: #fff; clip-path: polygon(0 0, 100% 0, 50% 100%); }
.m2 { margin-left: 2px; }
.std { width: 438px; }
.loadtxt { margin-left: 4px; margin-right: 6px; color: #000; }
.mfr { width: 877px; }
.mfr .grip { margin-left: 4px; margin-right: 6px; }
.combo { background: #fff; height: 20px; display: flex; align-items: center; justify-content: space-between; padding: 1px 1px 1px 3px; flex: none; color: #000; }
.combo .dd { width: 14px; height: 100%; background: linear-gradient(#b4bac4, #969eaa); }
.mfr .combo { margin: 5px 3px 0 0; height: 19px; }
.k1 { width: 181px; }
.k2 { width: 177px; }
.k3 { width: 486px; }

.circuits { width: 488px; }
.devices { width: 1290px; }
.row2 .grip { height: 40px; }
.big { height: 51px; display: flex; flex-direction: column; align-items: center; padding-top: 5px; line-height: 13px; flex: none; }
.big .i { margin-bottom: 2px; height: 16px; }
.off { color: #868a90; }
.e1 { width: 80px; }
.e2 { width: 72px; }
.e3 { width: 76px; }
.tall { height: 30px; width: 9px; }
.on { background: linear-gradient(#fbdcb4, #ffb45e 40%, #ffc070 60%, #ffe98c); border: 1px solid #e8d0a8; }
.hot { background: linear-gradient(#fff8dc, #ffe9a0); border: 1px solid #e8d9a0; }
.e4 { width: 78px; height: 47px; padding-top: 2px; }
.branch { width: 147px; height: 46px; margin-left: 2px; }
.branch .combo { height: 20px; }
.btxt { margin: 7px auto 0; }
.list { display: flex; gap: 18px; margin-left: 9px; }

.main { display: flex; height: 884px; flex: none; }
.left { width: 26px; padding-left: 1px; flex: none; }
.vbar { background: linear-gradient(90deg, #cdd0d6, #8f97a3); width: 24px; display: flex; flex-direction: column; align-items: center; border-radius: 0 0 4px 4px; }
.vgrip { width: 15px; height: 2px; margin: 4px 0; background: repeating-linear-gradient(90deg, #444 0 2px, #e8e8e8 2px 3px, transparent 3px 4px); flex: none; }
.v1 { height: 137px; gap: 5px; }
.v1 .vgrip { margin-bottom: 0; }
.v2 { height: 326px; }
.v2 .vgrip { margin-bottom: 3.500px; }
.v2 .i { margin: 2.500px 0; }
.letterA { font: bold 17px/19px "Liberation Serif", serif; margin-bottom: -4px; }
.abc { font: bold 7px/7px "Liberation Sans", sans-serif; height: 17px; padding-top: 3px; letter-spacing: .2px; }
.vof { height: 12px; width: 24px; background: linear-gradient(90deg, #4f5565, #a2a7b1); display: flex; align-items: center; justify-content: flex-end; gap: 2px; padding-right: 3px; }
.vof::before { content: ""; width: 1px; height: 6px; background: #fff; }
.vof::after { content: ""; width: 4px; height: 6px; background: #ddd; clip-path: polygon(0 0, 100% 50%, 0 100%); }

.center { width: 1868px; flex: none; }
.work { height: 865px; display: flex; gap: 4px; }
.panel { width: 300px; flex: none; display: flex; flex-direction: column; border-top: 1px solid #ddd; border-left: 1px solid #ddd; }
.phead { height: 20px; background: #9e9f9d; display: flex; align-items: center; justify-content: space-between; padding: 0 5px 2px 4px; color: #454545; }
.phead svg { width: 26px; height: 12px; }
.pbody { background: #fff; border: 2px solid #e8e8e8; border-top-width: 3px; height: 821px; border-right: 3px solid #d8d8d8; padding-bottom: 2px; overflow: hidden; }
.ptools { height: 23px; background: linear-gradient(#c8ccd3, #929aa6); display: flex; align-items: center; padding-left: 5px; padding-bottom: 2px; gap: 6px; overflow: hidden; }
.ptools .i { overflow: hidden; }
.ptools .sep { width: 2px; margin: 0 .6px; height: 13px; background: linear-gradient(90deg, #60656f 1px, #fff 1px); }
.sun { width: 5px; height: 12px; flex: none; }
.cols { height: 19px; background: linear-gradient(#fafafa, #ececec); border-bottom: 1px solid #ccc; display: grid; grid-template-columns: 100px 20px 20px 20px 20px 75px; font-size: 12px; line-height: 18px; }
.cols span { border-right: 1px solid #c4c4c4; padding-left: 5px; }
.cols span:first-child { padding-left: 6px; }
.r { height: 17px; display: grid; grid-template-columns: 15px 85px 19px 20px 21px 19px 1fr; align-items: center; font-size: 12px; width: 255px; line-height: 15px; }
.r .t { align-self: stretch; width: 9px; margin-left: 7px; background: repeating-linear-gradient(90deg, #888 0 1px, transparent 1px 2px) 0 50%/7px 1px no-repeat; border-left: 1px dotted #888; }
.r .t.last { height: 9px; background-position: 0 100%; }
.r .t.plus { border: 1px solid #888; width: 9px; height: 9px; margin: 4px 0 0 3px; background: linear-gradient(#000, #000) 50% 50%/5px 1px no-repeat, linear-gradient(#000, #000) 50% 50%/1px 5px no-repeat, #fff; }
.r .n { padding-left: 2px; align-self: stretch; }
.r svg { shape-rendering: crispEdges; }
.eye { width: 16px; height: 12px; }
.mag { width: 14px; height: 15px; margin-left: 1px; }
.sw { grid-column: 6; width: 18px; height: 14px; background: #000; border: 1px solid #999; }
.q { margin-left: 4px; }
.sel { background: linear-gradient(90deg, transparent 15px, #0078d7 15px); color: #fff; }
.sel svg { opacity: .65; }
.ptabs { display: flex; height: 22px; color: #fff; align-items: center; gap: 8.300px; padding-left: 4px; }
.ptabs .act { background: linear-gradient(90deg, #fff, #eee); color: #000; height: 20px; padding: 4px 3px 0; width: 37px; border-radius: 0 0 3px 3px; align-self: flex-start; }
.ptabs span:nth-child(3) { margin-left: 4px; }
.ptabs span:nth-child(6) { margin-left: 5px; }
.ptabs span:nth-child(7) { margin-left: -2px; }

.docs { width: 1564px; border-top: 1px solid #a9abb4; border-left: 1px solid #a9abb4; }
.dtabs { height: 19px; display: flex; align-items: center; color: #fff; padding-left: 7px; }
.p2 { margin-left: 15px; }
.dtabs .act { margin-left: 8px; width: 256px; height: 17px; align-self: flex-end; background: linear-gradient(#fff, #dde1e8); display: flex; align-items: center; padding-left: 5px; padding-bottom: 1px; gap: 10px; color: #000; font-weight: 700; border-radius: 5px 4px 0 0; }
.dtabs .act svg { width: 10px; height: 10px; }
.tnav { width: 24px; height: 12px; margin-left: auto; margin-right: 7px; }
.frame { height: 845px; background: #e9e9e9; border: 1px solid #fff; border-width: 2px 2px 1px 1px; padding: 0 4px 6px 1px; }
.view { border: 3px solid #777; border-width: 4px 0 0 3px; border-color: #8a8a8a #fff #fff #777; display: grid; grid-template: 798px 16px / 1535px 17px; background: #f0f0f0; }
#canvas { width: 1535px; height: 798px; background: #fff; display: block; }
.vs { padding: 118px 0 0 7px; }
.vs i { width: 2px; height: 17px; background: #808080; }
.hs { padding: 6px 0 0 85px; }
.hs i { width: 17px; height: 2px; background: #858585; }
.sheets { height: 18px; margin-left: 3px; background: linear-gradient(#4c4c4c, #6a6a6a 35%, #797979); display: flex; align-items: flex-start; padding-left: 1px; }
.nav { width: 62px; height: 14px; margin-top: 2px; flex: none; }
.s1, .s2 { height: 17px; padding-top: 3px; clip-path: polygon(0 0, 100% 0, calc(100% - 15px) 100%, 8px 100%); }
.s1 { background: #fff; width: 62px; margin-left: 4px; padding-left: 8px; font-weight: 700; color: #000; z-index: 1; }
.s2 { background: #c4cad4; width: 63px; margin-left: -11px; padding-left: 9px; }
.status { height: 19px; display: flex; align-items: center; color: #fff; padding-left: 4px; padding-top: 2px; background: linear-gradient(#3c404e 0 35%, #2b2b2b 45%); border-top: 1px solid #555; }
.status i, .f0, .f1, .f2 { border-left: 1px solid #777; }
.status i { width: 6px; height: 14px; }
.f0 { margin-left: auto; width: 58px; padding-left: 3px; }
.f1 { width: 34px; padding-left: 4px; }
.f2 { width: 28px; padding-left: 3px; }
.right { width: 26px; }
.rbar { width: 24px; height: 850px; background: linear-gradient(90deg, #cdd0d6, #8f97a3); display: flex; flex-direction: column; align-items: center; border-radius: 0 0 4px 4px; font: 12.5px/16px "Liberation Sans", sans-serif; }
.rbar .vgrip { margin-bottom: 9px; }
.rbar span { writing-mode: vertical-rl; flex: none; margin-left: 2px; }
.hsep { height: 2px; width: 14px; margin: 5px 0 10.200px; background: linear-gradient(#60656f 1px, #fff 1px); flex: none; }

.foot .bar { height: 25px; }
.foot .c { height: 21px; }
.f1b { width: 134px; }
.f1b .c { width: 20px; }
.inp { background: #fff; width: 60px; height: 16px; display: flex; align-items: center; justify-content: center; flex: none; color: #000; }
.f1b .inp { margin-left: 7px; }
.f2b { width: 325px; }
.f2b .grip { margin: 0 3px 0 4px; }
.f3b { width: 440px; }
.f3b .grip { margin: 0 3px; }
.lock { width: 85px; height: 22px; margin: 0 1px; display: flex; align-items: center; justify-content: center; color: #000; }
.f4b { width: 350px; }
.f4b .grip { margin: 0 7px 0 3px; }
.f4b .sep { margin: 0 2px 0 3px; }
.ax { display: flex; gap: 4px; align-items: center; color: #777b82; margin-right: 5px; }
.f4b .ax { margin-left: 2px; }
```
FILE: drawing.js
```js
// Condense or expand labels so that each takes its allotted length.
document.querySelectorAll('[data-w],[data-h]').forEach(function (el) {
  var vertical = el.hasAttribute('data-h');
  var want = +(vertical ? el.dataset.h : el.dataset.w);
  var range = document.createRange();
  range.selectNodeContents(el);
  var box = range.getBoundingClientRect();
  var have = vertical ? box.height : box.width;
  el.style.letterSpacing = ((want - have) / el.textContent.length).toFixed(3) + 'px';
  el.style[vertical ? 'height' : 'width'] = want + 'px';
});

var out = [];
var seed = 7;
function rnd() { seed = (seed * 1103515245 + 12345) % 2147483648; return seed / 2147483648; }
function path(d, stroke, extra) { out.push('<path d="' + d + '" fill="none" stroke="' + (stroke || '#000') + '" ' + (extra || '') + '/>'); }

// Text too small to read at this zoom, drawn as broken dashes.
function tiny(x, y, w) {
  var d = '';
  for (var px = x; px < x + w;) {
    var l = 1 + rnd() * 2.500;
    d += 'M' + px.toFixed(1) + ' ' + (y + (rnd() > .65 ? 1 : 0)) + 'h' + Math.min(l, x + w - px).toFixed(1);
    px += l + (rnd() > .5 ? 1 : .2);
  }
  path(d, '#000', 'stroke-width="1.2"');
}

function report(x, y, w, h, cols, rows) {
  path('M' + x + ' ' + y + 'h' + w + 'v' + h + 'h' + -w + 'z', '#111');
  path('M' + x + ' ' + (y + 5) + 'h' + w, '#777', 'stroke-width="1.5"');
  tiny(x + w * .36, y + 2, w * .3);
  tiny(x + 2, y + 7, 54);
  tiny(x + 2, y + 13, 40);
  rows.forEach(function (r, i) {
    path('M' + x + ' ' + (y + r) + 'h' + w, i % 2 ? '#222' : '#777', i % 2 ? '' : 'stroke-width="1.5"');
  });
  cols.forEach(function (c) { path('M' + (x + c) + ' ' + (y + 16) + 'v33', '#555'); });
  [18, 25, 29, 33, 37, 41, 46].forEach(function (r, i) {
    cols.slice(2).forEach(function (c) {
      var start = c + 4 + rnd() * 4;
      if (i != 3 && i != 5 || rnd() > .4) tiny(x + start, y + r, Math.min(14, w - start - 1));
    });
    if (i < 5) { tiny(x + cols[1] + 2, y + r, i % 2 ? 48 : 20); tiny(x + 2, y + r, 11); }
  });
  [54, 57, 60].forEach(function (r, i) { tiny(x + w - 40 + i * 2, y + r, 18); tiny(x + w - 11, y + r, 9); });
  tiny(x + w - 115, y + h - 2, 112);
}
var ra = [16, 19.5, 22, 27.5, 30.5, 34.5, 37.5, 40.5, 44, 47, 49.5];
report(1018.5, 379.5, 166, 66, [14, 20.5, 80, 106, 127, 150], ra);
report(1185.5, 379.5, 196, 66, [30, 37, 109, 135, 156, 179], ra);
report(1018.5, 446.5, 169, 66, [14, 20.5, 82, 109, 129, 152], ra);
report(1188.5, 446.5, 166, 66, [13, 20, 79, 105, 126, 149], ra);
report(1018.5, 512.5, 170, 70, [14, 20.5, 83, 109, 130, 152], ra.concat([52]));
report(1188.5, 512.5, 169, 66, [13, 20, 82, 108, 129, 152], ra);

// User coordinate system marker
path('M1178.5 512v-60h-9l19-40 20.500 40h-10v50', '#2c862c');
path('M1198.500 502.500h50v-10l40 20-40 20v-10h-60', '#983232');
out.push('<circle cx="1188.500" cy="512.500" r="10" fill="#fff" stroke="#999"/><path d="M1188.500 512.500v-10a10 10 0 0 0-10 10zM1188.500 512.500v10a10 10 0 0 0 10-10z"/>');
path('M1169 512.500h40', '#2222a0');

// Test sheets
path('M1875 658.500H1500.500V874.500H1875');
path('M1875 897H1498.500V950', '#333');
function label(x, y, size, len, color, text) {
  out.push('<text x="' + x + '" y="' + y + '" font-family="Liberation Sans, sans-serif" font-weight="700" font-size="' + size + '" textLength="' + len + '" fill="' + color + '">' + text + '</text>');
}
label(1682, 595, 18.5, 206, '#f00', 'BATTERY CALCULATION');
label(1516, 691, 18.5, 67, '#f00', 'TEST #1');
label(1518, 932, 18.5, 68, '#f00', 'TEST #2');
label(1746, 718, 8.800, 90, '#000', 'EXPECTED RESULT &gt;');
label(1790, 816.5, 9.200, 43, '#f00', 'ACTUAL &gt;');

// Circuit loop: three devices in each column
var nodes = [
  [[1559, 748], [1560.5, 770], [1562, 794]], [[1586, 748.5], [1588.5, 773], [1589.5, 794]],
  [[1615, 748.5], [1616.5, 770.5], [1618.5, 794.5]], [[1642.5, 749], [1645, 773], [1646, 794.5]],
  [[1668.5, 749], [1670.5, 771], [1672, 795]], [[1696, 749], [1698.5, 773.5], [1699.5, 795]],
  [[1727.5, 749], [1728.5, 771], [1730.5, 795]], [[1754.5, 749.5], [1757, 773.5], [1758, 795]]
];
path('M1522 769L1559 748', '#222');
out.push('<ellipse cx="1518" cy="770.500" rx="3.500" ry="1.500" fill="#ccc" stroke="#333"/>');
nodes.forEach(function (c, i) {
  path('M' + c.join('L'), '#222', 'stroke-width="1.2"');
  if (nodes[i + 1]) { var k = i % 2 ? 0 : 2; path('M' + c[k] + 'L' + nodes[i + 1][k], '#222', 'stroke-width="1.2"'); }
  c.forEach(function (p) {
    out.push('<circle cx="' + p[0] + '" cy="' + p[1] + '" r="2.200" fill="#bbb" stroke="#333" stroke-width=".8"/>');
    tiny(p[0] + 4, Math.round(p[1]) - 1.5, 12);
    tiny(p[0] - 3, Math.round(p[1]) - 3.5, 4);
  });
});

// Result report clipped by the right edge
path('M1875 682.500H1854V748.500H1875', '#555', 'stroke-width="1.500"');
[688, 692, 699, 703, 707, 712, 715, 720, 725, 731].forEach(function (y, i) { path('M1854 ' + (y + .5) + 'h18', i % 2 ? '#111' : '#777'); });
[689.5, 696.5, 700.5, 707.5, 718.5].forEach(function (y) { tiny(1856, y, 15); });
path('M1867.500 700v30', '#777');
path('M1875 917H1854V927', '#555');
tiny(1857, 922.5, 14);
path('M1855 920.500h16', '#777');
out.push('<rect x="1850.500" y="926.500" width="20" height="19" fill="#ffffe1" stroke="#666"/><path d="M1852 942l14-14M1854 936q1-6 7-6M1865 933q-1 7-7 7" stroke="#0000c0" stroke-width="1.800" fill="none"/><circle cx="1859.500" cy="935" r="2.700" fill="#d00"/>');
document.getElementById('canvas').innerHTML = out.join('');
```
